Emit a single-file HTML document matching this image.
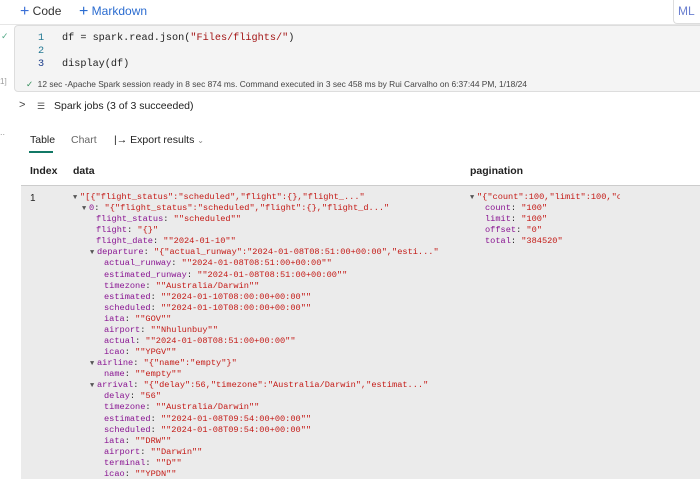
<!DOCTYPE html>
<html><head><meta charset="utf-8"><style>
*{margin:0;padding:0;box-sizing:border-box}
html,body{width:700px;height:479px;overflow:hidden}
body{background:#fff;font-family:"Liberation Sans",sans-serif;position:relative;color:#222}
.a{position:absolute;white-space:pre}
.m{font-family:"Liberation Mono",monospace}
.k{color:#881391}.s{color:#c41a16}
.t{color:#555;font-size:7px;display:inline-block;width:7px;line-height:0}
.j{position:absolute;font-family:"Liberation Mono",monospace;font-size:8.65px;white-space:normal}
.j div{height:11.08px;line-height:11.08px;white-space:pre}
</style></head><body>
<div class="a" style="left:20px;top:2px;font-size:12px;color:#333"><span style="color:#3a6fd6;font-size:16px;position:relative;top:1px">+</span> Code</div>
<div class="a" style="left:79px;top:2px;font-size:12px;color:#2b6cd0"><span style="font-size:16px;position:relative;top:1px">+</span> Markdown</div>
<div class="a" style="left:673px;top:0;width:27px;height:24px;border-left:1px solid #ddd;border-bottom:1px solid #ddd;border-radius:0 0 0 4px;font-size:12px;color:#6a7fd0;padding:4px 4px">ML</div>
<div class="a" style="left:0;top:24px;width:700px;height:1px;background:#e6e6e6"></div>
<div class="a" style="left:14px;top:25px;width:700px;height:67px;background:#f4f4f4;border:1px solid #ddd;border-radius:4px"></div>
<div class="a" style="left:1px;top:31px;color:#5a8;font-size:9px">✓</div>
<div class="a" style="left:0;top:77px;color:#999;font-size:8px">1]</div>
<div class="a m" style="left:38px;top:33px;font-size:10.2px;color:#237893">1</div>
<div class="a m" style="left:38px;top:46px;font-size:10.2px;color:#237893">2</div>
<div class="a m" style="left:38px;top:59px;font-size:10.2px;color:#1a3c8a">3</div>
<div class="a m" style="left:62px;top:33px;font-size:10.2px;color:#222">df = spark.read.json(<span style="color:#a31515">"Files/flights/"</span>)</div>
<div class="a m" style="left:62px;top:59px;font-size:10.2px;color:#222">display(df)</div>
<div class="a" style="left:26px;top:79px;font-size:8.4px;color:#444"><span style="color:#2e8b57">✓</span>&nbsp; 12 sec -Apache Spark session ready in 8 sec 874 ms. Command executed in 3 sec 458 ms by Rui Carvalho on 6:37:44 PM, 1/18/24</div>
<div class="a" style="left:19px;top:99px;font-size:11px;color:#444">&gt;</div>
<div class="a" style="left:37px;top:101px;font-size:9px;color:#555">☰</div>
<div class="a" style="left:54px;top:100px;font-size:10.5px;color:#222">Spark jobs (3 of 3 succeeded)</div>
<div class="a" style="left:0;top:127px;font-size:9px;color:#999">..</div>
<div class="a" style="left:30px;top:134px;font-size:10.5px;color:#222">Table</div>
<div class="a" style="left:29px;top:151px;width:24px;height:2px;background:#117865"></div>
<div class="a" style="left:71px;top:134px;font-size:10.5px;color:#666">Chart</div>
<div class="a" style="left:114px;top:134px;font-size:10.5px;color:#222">|→ Export results <span style="color:#888;font-size:8px">⌄</span></div>
<div class="a" style="left:30px;top:165px;font-size:10.5px;font-weight:bold;color:#222">Index</div>
<div class="a" style="left:73px;top:165px;font-size:10.5px;font-weight:bold;color:#222">data</div>
<div class="a" style="left:470px;top:165px;font-size:10.5px;font-weight:bold;color:#222">pagination</div>
<div class="a" style="left:21px;top:185px;width:679px;height:294px;background:#ebebeb;border-top:1px solid #ccc"></div>
<div class="a" style="left:30px;top:193px;font-size:10px;color:#222">1</div>
<div class="j" style="left:73px;top:192px"><div><span class="t">▼</span><span class="s">"[{"flight_status":"scheduled","flight":{},"flight_..."</span></div><div style="margin-left:9px"><span class="t">▼</span><span class="k">0</span>: <span class="s">"{"flight_status":"scheduled","flight":{},"flight_d..."</span></div><div style="margin-left:23px"><span class="k">flight_status</span>: <span class="s">""scheduled""</span></div><div style="margin-left:23px"><span class="k">flight</span>: <span class="s">"{}"</span></div><div style="margin-left:23px"><span class="k">flight_date</span>: <span class="s">""2024-01-10""</span></div><div style="margin-left:17px"><span class="t">▼</span><span class="k">departure</span>: <span class="s">"{"actual_runway":"2024-01-08T08:51:00+00:00","esti..."</span></div><div style="margin-left:31px"><span class="k">actual_runway</span>: <span class="s">""2024-01-08T08:51:00+00:00""</span></div><div style="margin-left:31px"><span class="k">estimated_runway</span>: <span class="s">""2024-01-08T08:51:00+00:00""</span></div><div style="margin-left:31px"><span class="k">timezone</span>: <span class="s">""Australia/Darwin""</span></div><div style="margin-left:31px"><span class="k">estimated</span>: <span class="s">""2024-01-10T08:00:00+00:00""</span></div><div style="margin-left:31px"><span class="k">scheduled</span>: <span class="s">""2024-01-10T08:00:00+00:00""</span></div><div style="margin-left:31px"><span class="k">iata</span>: <span class="s">""GOV""</span></div><div style="margin-left:31px"><span class="k">airport</span>: <span class="s">""Nhulunbuy""</span></div><div style="margin-left:31px"><span class="k">actual</span>: <span class="s">""2024-01-08T08:51:00+00:00""</span></div><div style="margin-left:31px"><span class="k">icao</span>: <span class="s">""YPGV""</span></div><div style="margin-left:17px"><span class="t">▼</span><span class="k">airline</span>: <span class="s">"{"name":"empty"}"</span></div><div style="margin-left:31px"><span class="k">name</span>: <span class="s">""empty""</span></div><div style="margin-left:17px"><span class="t">▼</span><span class="k">arrival</span>: <span class="s">"{"delay":56,"timezone":"Australia/Darwin","estimat..."</span></div><div style="margin-left:31px"><span class="k">delay</span>: <span class="s">"56"</span></div><div style="margin-left:31px"><span class="k">timezone</span>: <span class="s">""Australia/Darwin""</span></div><div style="margin-left:31px"><span class="k">estimated</span>: <span class="s">""2024-01-08T09:54:00+00:00""</span></div><div style="margin-left:31px"><span class="k">scheduled</span>: <span class="s">""2024-01-08T09:54:00+00:00""</span></div><div style="margin-left:31px"><span class="k">iata</span>: <span class="s">""DRW""</span></div><div style="margin-left:31px"><span class="k">airport</span>: <span class="s">""Darwin""</span></div><div style="margin-left:31px"><span class="k">terminal</span>: <span class="s">""D""</span></div><div style="margin-left:31px"><span class="k">icao</span>: <span class="s">""YPDN""</span></div></div>
<div class="a" style="left:470px;top:192px;width:150px;height:60px;overflow:hidden"><div class="j" style="left:0;top:0"><div><span class="t">▼</span><span class="s">"{"count":100,"limit":100,"o</span></div><div style="margin-left:15px"><span class="k">count</span>: <span class="s">"100"</span></div><div style="margin-left:15px"><span class="k">limit</span>: <span class="s">"100"</span></div><div style="margin-left:15px"><span class="k">offset</span>: <span class="s">"0"</span></div><div style="margin-left:15px"><span class="k">total</span>: <span class="s">"384520"</span></div></div></div>
</body></html>
